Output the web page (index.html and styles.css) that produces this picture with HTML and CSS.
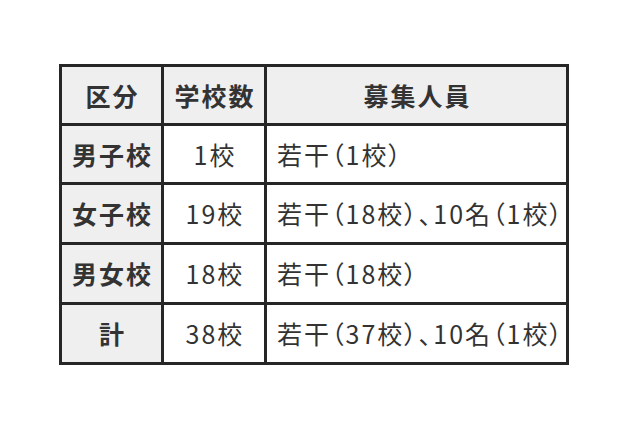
FILE: index.html
```html
<!DOCTYPE html>
<html lang="ja">
<head>
<meta charset="utf-8">
<link rel="stylesheet" href="styles.css">
</head>
<body>
<table class="recruit">
  <thead>
    <tr class="row-h">
      <th class="c1">区分</th>
      <th class="c2">学校数</th>
      <th class="c3">募集人員</th>
    </tr>
  </thead>
  <tbody>
    <tr class="row-a">
      <th class="c1">男子校</th>
      <td class="c2">1校</td>
      <td class="c3 txt">若干（1校）</td>
    </tr>
    <tr class="row-b">
      <th class="c1">女子校</th>
      <td class="c2">19校</td>
      <td class="c3 txt">若干（18校）、10名（1校）</td>
    </tr>
    <tr class="row-b">
      <th class="c1">男女校</th>
      <td class="c2">18校</td>
      <td class="c3 txt">若干（18校）</td>
    </tr>
    <tr class="row-b">
      <th class="c1">計</th>
      <td class="c2">38校</td>
      <td class="c3 txt">若干（37校）、10名（1校）</td>
    </tr>
  </tbody>
</table>
</body>
</html>
```
FILE: styles.css
```css
html, body {
  margin: 0;
  padding: 0;
  background: #ffffff;
}
body {
  font-family: "Noto Sans CJK JP", "Noto Sans", sans-serif;
  color: #333333;
}
.recruit {
  margin: 64px 0 0 59px;
  border-collapse: separate;
  border-spacing: 0;
  table-layout: fixed;
  width: 510px;
  border-left: 3px solid #262626;
  border-top: 3px solid #262626;
  font-size: 25px;
  letter-spacing: 2px;
  font-feature-settings: "palt";
}
.recruit th,
.recruit td {
  box-sizing: border-box;
  border-right: 3px solid #262626;
  border-bottom: 3px solid #262626;
  padding: 0 0 0 2px;
  text-align: center;
  vertical-align: middle;
  line-height: 1;
}
.recruit th {
  font-weight: 700;
  background: #efefef;
}
.recruit td {
  font-weight: 400;
  background: #ffffff;
}
.c1 { width: 102px; }
.c2 { width: 103px; }
.c3 { width: 302px; }
.recruit td.txt {
  text-align: left;
  padding-left: 10px;
}
.row-h { height: 59px; }
.row-a { height: 59px; }
.row-b { height: 60px; }
```
